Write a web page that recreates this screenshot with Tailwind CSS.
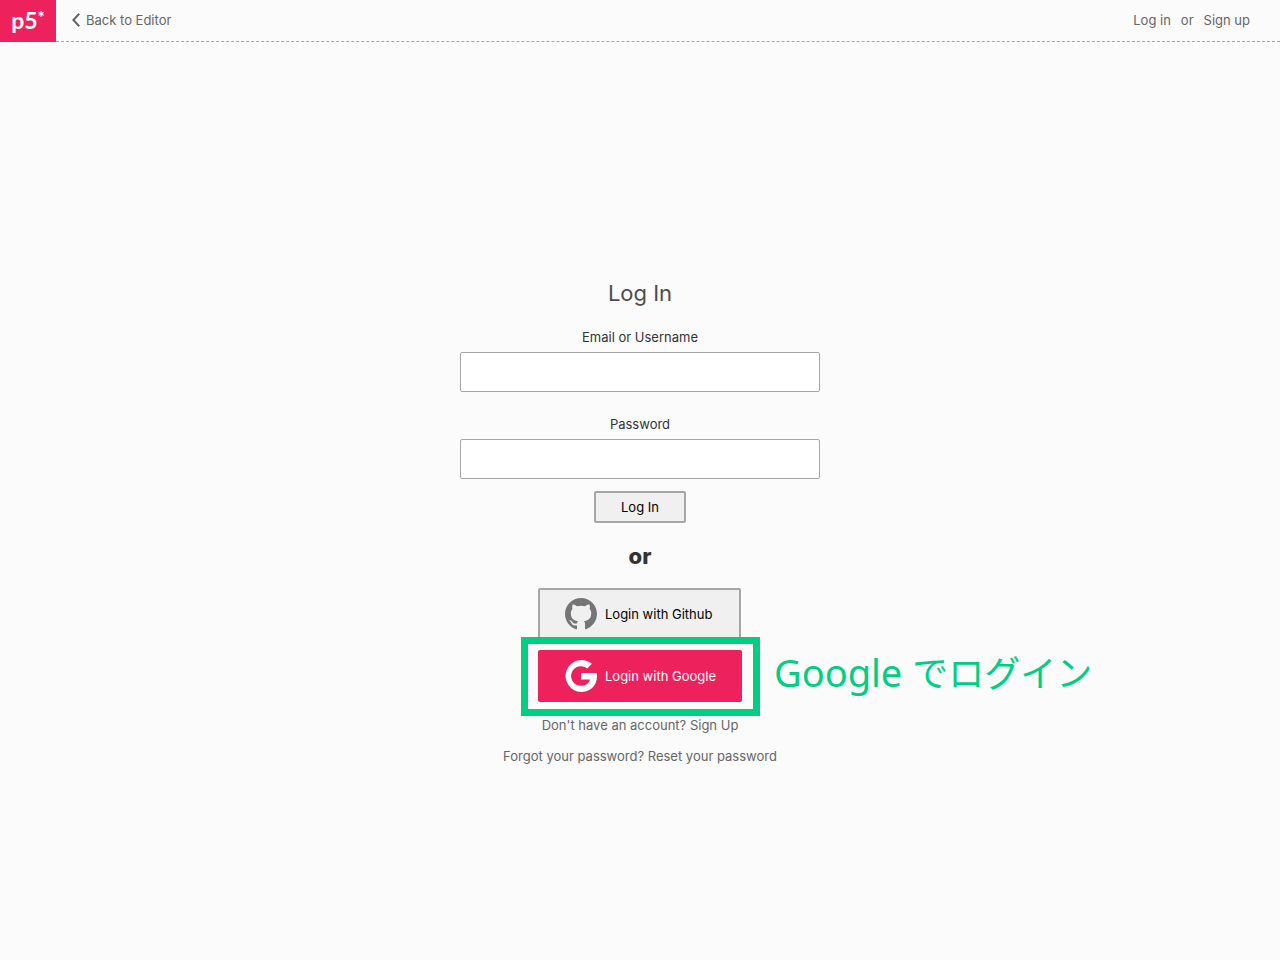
<!DOCTYPE html>
<html lang="ja">
<head>
<meta charset="utf-8">
<meta name="viewport" content="width=device-width, initial-scale=1">
<title>p5.js Web Editor | Login</title>
<script src="https://cdn.jsdelivr.net/npm/@tailwindcss/browser@4"></script>
</head>
<body class="flex min-h-screen flex-col bg-[#fbfbfb] font-['Inter','Noto_Sans_CJK_JP',sans-serif] text-[13px] leading-4 text-[#666]">
<header class="flex h-[42px] items-stretch">
  <a href="#" aria-label="p5.js" class="flex w-14 justify-center bg-[#ed225d] pt-1 font-['Lato',sans-serif] text-[23px] leading-8 font-bold text-white"><span>p5</span><span class="text-[17px] leading-7">*</span></a>
  <nav class="flex flex-1 items-center justify-between border-b border-dashed border-[#a6a6a6] pr-[30px] pb-px pl-4">
    <a href="#" class="flex items-center gap-1.5">
      <svg class="h-3.5 w-2" viewBox="0 0 8 14" fill="none" stroke="#666" stroke-width="2"><path d="M7.2 .8L1.4 7l5.800 6.200"/></svg>
      <span>Back to Editor</span>
    </a>
    <div class="flex items-center gap-2.5"><a href="#">Log in</a><span>or</span><a href="#">Sign up</a></div>
  </nav>
</header>
<main class="flex flex-col items-center px-4 pt-[235px]">
  <h1 class="text-[22px] leading-8 text-[#4d4d4d]">Log In</h1>
  <form class="mt-5 flex w-full max-w-[360px] flex-col items-center text-[#333]">
    <label for="email">Email or Username</label>
    <input id="email" type="text" class="mt-[7px] h-10 w-full rounded-xs border border-[#a6a6a6] bg-white px-4">
    <label for="password" class="mt-6">Password</label>
    <input id="password" type="password" class="mt-[7px] h-10 w-full rounded-xs border border-[#a6a6a6] bg-white px-4">
    <button type="submit" class="mt-3 h-8 rounded-xs border-2 border-[#a6a6a6] bg-[#f0f0f0] px-[25px] pb-px text-black">Log In</button>
  </form>
  <h2 class="mt-[17px] text-[22px] leading-8 font-extrabold text-[#333]">or</h2>
  <div class="relative mt-4 flex w-[204px] flex-col gap-2.5">
    <button type="button" class="flex h-[52px] w-[203px] items-center gap-2 rounded-xs border-2 border-[#a6a6a6] bg-[#f0f0f0] pl-[25px] text-black">
      <svg class="size-8" viewBox="0 0 16 16" fill="#757575"><path d="M8 0C3.58 0 0 3.58 0 8c0 3.54 2.29 6.53 5.47 7.59.4.07.55-.17.55-.38 0-.19-.01-.82-.01-1.49-2.01.37-2.53-.49-2.69-.94-.09-.23-.48-.94-.82-1.13-.28-.15-.68-.52-.01-.53.63-.01 1.08.58 1.23.82.72 1.21 1.87.87 2.33.66.07-.52.28-.87.51-1.07-1.78-.2-3.64-.89-3.64-3.95 0-.87.31-1.59.82-2.15-.08-.2-.36-1.02.08-2.12 0 0 .67-.21 2.2.82.64-.18 1.32-.27 2-.27s1.36.09 2 .27c1.53-1.04 2.2-.82 2.2-.82.44 1.1.16 1.92.08 2.12.51.56.82 1.27.82 2.15 0 3.07-1.87 3.75-3.65 3.95.29.25.54.73.54 1.48 0 1.07-.01 1.93-.01 2.2 0 .21.15.46.55.38A8.01 8.01 0 0 0 16 8c0-4.42-3.58-8-8-8z"/></svg>
      <span class="pb-px">Login with Github</span>
    </button>
    <button type="button" class="flex h-[52px] items-center gap-2 rounded-xs border-2 border-[#ed225d] bg-[#ed225d] pl-[25px] text-white">
      <svg class="size-8" viewBox="0 0 32 32" fill="#fff"><path d="M31.700 13.100H16v6.400h9c-1 4-4.500 6.300-9 6.300A9.800 9.800 0 1 1 22.200 8.500l4.700-4.700A16 16 0 1 0 16 32C24.300 32 32 26.500 32 16c0-1-.1-2-.3-2.900z"/></svg>
      <span class="pb-px">Login with Google</span>
    </button>
    <div class="pointer-events-none absolute top-[49px] -left-[17px] h-[79px] w-[239px] border-7 border-[#00cf83]"></div>
    <p class="absolute top-[59px] left-[236px] font-['Noto_Sans','Noto_Sans_CJK_JP',sans-serif] text-[38px] leading-[50px] whitespace-nowrap text-[#00cf83]">Google <span class="text-[36px]">でログイン</span></p>
  </div>
  <p class="mt-[15px]">Don't have an account? <a href="#">Sign Up</a></p>
  <p class="mt-[15px]">Forgot your password? <a href="#">Reset your password</a></p>
</main>
</body>
</html>
